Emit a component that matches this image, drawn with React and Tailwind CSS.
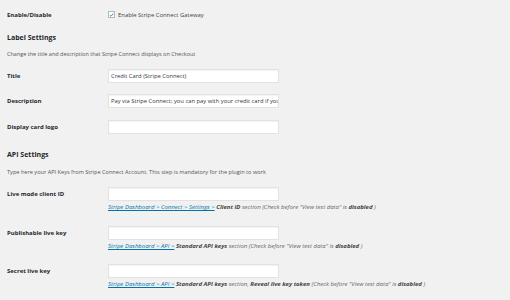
import React from "react";

const F = { fontFamily: '"Open Sans", "Noto Sans", sans-serif' };

function Label({ children }) {
  return (
    <div className="w-[101px] shrink-0 text-[6px] font-bold text-[#23282d] leading-[14px]">
      {children}
    </div>
  );
}

function Input({ value }) {
  return (
    <div className="w-[171px] h-[14px] bg-white border border-[#e2e2e2] shadow-[inset_0_1px_1px_rgba(0,0,0,0.05)] flex items-center px-[2px] overflow-hidden whitespace-nowrap text-[5.8px] text-[#32373c]">
      {value}
    </div>
  );
}

function Help({ path, strong, rest }) {
  return (
    <div className="ml-[101px] mt-[2px] h-[8px] leading-[8px] text-[6px] italic text-[#666] whitespace-nowrap">
      <span className="text-[#0073aa] underline">{path}</span>{" "}
      <span className="font-bold text-[#444]">{strong}</span>
      {rest}
      <span className="font-bold text-[#444]">disabled</span> )
    </div>
  );
}

export default function App() {
  return (
    <div className="w-[510px] h-[300px] bg-[#f1f1f1] px-[7px] overflow-hidden" style={F}>
      <div className="pt-[8px] flex items-center h-[22px]">
        <Label>Enable/Disable</Label>
        <div className="flex items-center gap-[3px]">
          <div className="w-[7px] h-[7px] bg-white border border-[#b4b9be] flex items-center justify-center">
            <svg width="6" height="6" viewBox="0 0 10 10">
              <path d="M1.5 5.2 L4 7.6 L8.6 2" fill="none" stroke="#1e8cbe" strokeWidth="1.8" />
            </svg>
          </div>
          <span className="text-[5.9px] text-[#444]">Enable Stripe Connect Gateway</span>
        </div>
      </div>

      <div className="mt-[11px] h-[10px] leading-[10px] text-[7px] font-bold text-[#23282d]">Label Settings</div>
      <div className="mt-[7px] h-[8px] leading-[8px] text-[5.5px] text-[#555]">
        Change the title and description that Stripe Connect displays on Checkout
      </div>

      <div className="mt-[11px] flex items-center">
        <Label>Title</Label>
        <Input value="Credit Card (Stripe Connect)" />
      </div>
      <div className="mt-[11px] flex items-center">
        <Label>Description</Label>
        <Input value="Pay via Stripe Connect; you can pay with your credit card if you" />
      </div>
      <div className="mt-[12px] flex items-center">
        <Label>Display card logo</Label>
        <Input value="" />
      </div>

      <div className="mt-[16px] h-[10px] leading-[10px] text-[7px] font-bold text-[#23282d]">API Settings</div>
      <div className="mt-[8px] h-[8px] leading-[8px] text-[5.6px] text-[#555]">
        Type here your API Keys from Stripe Connect Account. This step is mandatory for the plugin to work
      </div>

      <div className="mt-[11px] flex items-center">
        <Label>Live mode client ID</Label>
        <Input value="" />
      </div>
      <Help
        path="Stripe Dashboard > Connect > Settings >"
        strong="Client ID"
        rest={' section (Check before "View test data" is '}
      />

      <div className="mt-[15px] flex items-center">
        <Label>Publishable live key</Label>
        <Input value="" />
      </div>
      <Help
        path="Stripe Dashboard > API >"
        strong="Standard API keys"
        rest={' section (Check before "View test data" is '}
      />

      <div className="mt-[14px] flex items-center">
        <Label>Secret live key</Label>
        <Input value="" />
      </div>
      <div className="ml-[101px] mt-[2px] h-[8px] leading-[8px] text-[6px] italic text-[#666] whitespace-nowrap">
        <span className="text-[#0073aa] underline">Stripe Dashboard &gt; API &gt;</span>{" "}
        <span className="font-bold text-[#444]">Standard API keys</span> section,{" "}
        <span className="font-bold text-[#444]">Reveal live key token</span> (Check before "View test data" is{" "}
        <span className="font-bold text-[#444]">disabled</span> )
      </div>
    </div>
  );
}
